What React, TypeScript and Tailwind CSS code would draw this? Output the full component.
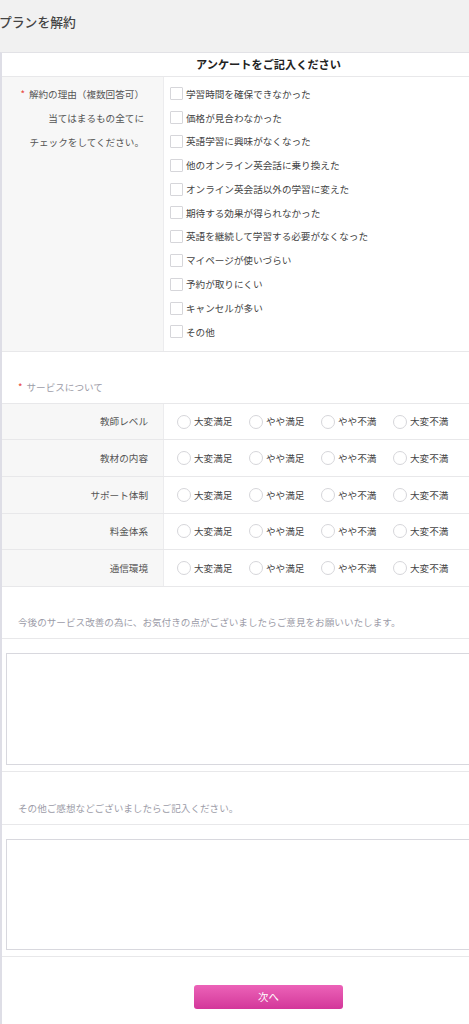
import type { ReactNode } from "react";

const REASONS = [
	"学習時間を確保できなかった",
	"価格が見合わなかった",
	"英語学習に興味がなくなった",
	"他のオンライン英会話に乗り換えた",
	"オンライン英会話以外の学習に変えた",
	"期待する効果が得られなかった",
	"英語を継続して学習する必要がなくなった",
	"マイページが使いづらい",
	"予約が取りにくい",
	"キャンセルが多い",
	"その他",
];

const SERVICES = ["教師レベル", "教材の内容", "サポート体制", "料金体系", "通信環境"];
const RATINGS = ["大変満足", "やや満足", "やや不満", "大変不満"];

function Req() {
	return <span className="mr-[4px] text-[#e8463e]">*</span>;
}

function Note({ children, h }: { children: ReactNode; h: string }) {
	return (
		<div className={`flex items-end border-b border-[#e8e8ea] pb-[9px] pl-[16px] text-[9.6px] leading-[14px] text-[#9c9ca8] ${h}`}>
			{children}
		</div>
	);
}

export default function App() {
	return (
		<div
			className="w-[469px] min-h-[1024px] overflow-hidden bg-white"
			style={{ fontFamily: '"Noto Sans CJK JP", "Noto Sans", sans-serif' }}
		>
			<div className="h-[52px] bg-[#f1f1f1] pt-[13px]">
				<h1 className="ml-[-1px] text-[12.8px] font-medium leading-[18px] text-[#444]">プランを解約</h1>
			</div>

			<div className="w-[535px] border-l-2 border-t border-[#dedee6] border-t-[#e2e2e6] bg-white">
				<div className="flex h-[24px] items-center justify-center border-b border-[#e8e8ea] text-[11.2px] font-bold text-[#222]">
					アンケートをご記入ください
				</div>

				{/* 解約の理由 */}
				<div className="flex border-b border-[#e8e8ea]">
					<div className="w-[162px] shrink-0 border-r border-[#ececee] bg-[#f7f7f7] pr-[19px] pt-[5px] text-right text-[9.6px] leading-[24px] text-[#555]">
						<div>
							<Req />
							解約の理由（複数回答可）
						</div>
						<div>当てはまるもの全てに</div>
						<div>チェックをしてください。</div>
					</div>
					<div className="pb-[7px] pl-[6px] pt-[5px]">
						{REASONS.map((r) => (
							<label key={r} className="flex h-[23.8px] items-center gap-[3px] text-[9.6px] text-[#444]">
								<span className="h-[13px] w-[13px] rounded-[1px] border border-[#d6d6da] bg-white" />
								{r}
							</label>
						))}
					</div>
				</div>

				<Note h="h-[52px]">
					<span>
						<Req />
						サービスについて
					</span>
				</Note>

				{SERVICES.map((s) => (
					<div key={s} className="flex h-[36.6px] border-b border-[#e8e8ea]">
						<div className="flex w-[162px] shrink-0 items-center justify-end border-r border-[#ececee] bg-[#f7f7f7] pr-[15px] text-[9.6px] text-[#555]">
							{s}
						</div>
						<div className="flex items-center pl-[13px]">
							{RATINGS.map((r) => (
								<label key={r} className="flex w-[72px] items-center gap-[3px] text-[9.6px] text-[#444]">
									<span className="h-[14px] w-[14px] rounded-full border border-[#d6d6da] bg-white" />
									{r}
								</label>
							))}
						</div>
					</div>
				))}

				<Note h="h-[52px]">今後のサービス改善の為に、お気付きの点がございましたらご意見をお願いいたします。</Note>
				<div className="border-b border-[#e8e8ea] pb-[6px] pl-[4px] pt-[14px]">
					<textarea className="block h-[112px] w-[540px] resize-none border border-[#d8d8de] bg-white" />
				</div>

				<Note h="h-[53px]">その他ご感想などございましたらご記入ください。</Note>
				<div className="border-b border-[#e8e8ea] pb-[6px] pl-[4px] pt-[14px]">
					<textarea className="block h-[111px] w-[540px] resize-none border border-[#d8d8de] bg-white" />
				</div>

				<div className="h-[70px] pl-[192px] pt-[25px]">
					<button className="h-[24px] w-[149px] rounded-[3px] bg-gradient-to-b from-[#ec62b8] to-[#d3369a] text-[10.4px] text-white">
						次へ
					</button>
				</div>
			</div>
		</div>
	);
}
